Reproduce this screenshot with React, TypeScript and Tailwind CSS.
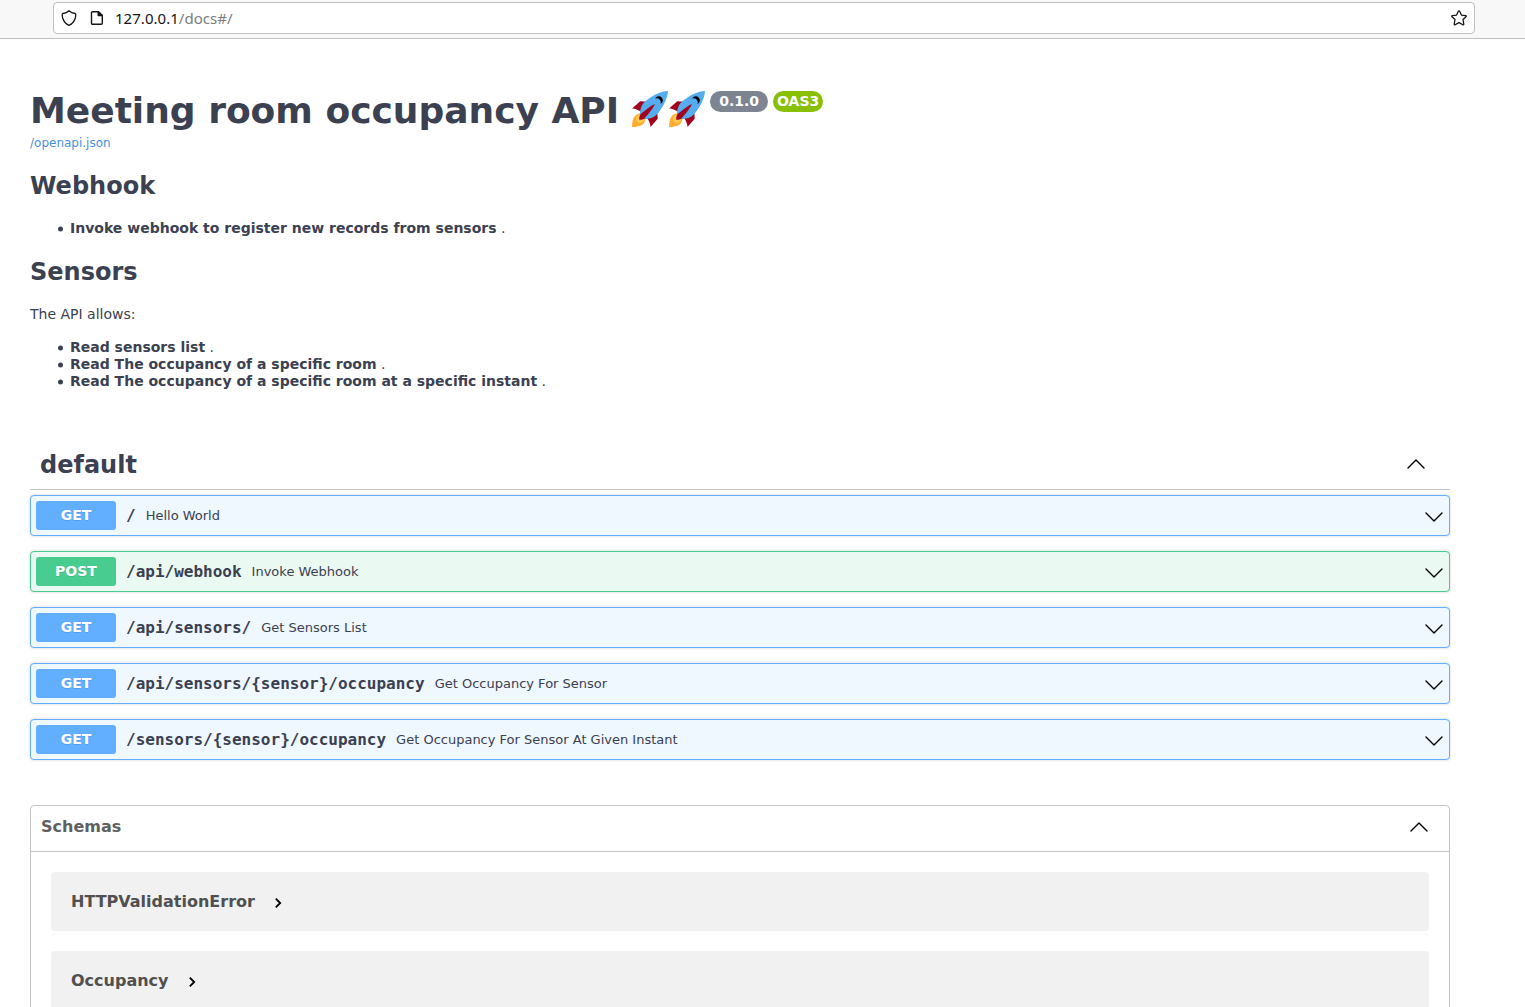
import React from "react";

const operations = [
  { method: "GET", path: "/", summary: "Hello World" },
  { method: "POST", path: "/api/webhook", summary: "Invoke Webhook" },
  { method: "GET", path: "/api/sensors/", summary: "Get Sensors List" },
  { method: "GET", path: "/api/sensors/{sensor}/occupancy", summary: "Get Occupancy For Sensor" },
  { method: "GET", path: "/sensors/{sensor}/occupancy", summary: "Get Occupancy For Sensor At Given Instant" },
];

const schemas = ["HTTPValidationError", "Occupancy"];

function Rocket() {
  return (
    <svg viewBox="0 0 36 36" className="h-[37px] w-[37px] shrink-0" aria-hidden="true">
      <path fill="#A0041E" d="M1 17l8-7 16 1 1 16-7 8s.001-5.999-6-12-12-6-12-6z" />
      <path fill="#FFAC33" d="M.973 35s-.036-7.979 2.985-11S15 21.187 15 21.187 14.999 29 11.999 32c-3 3-11.026 3-11.026 3z" />
      <circle fill="#FFCC4D" cx="8.999" cy="27" r="4" />
      <path fill="#55ACEE" d="M35.999 0s-10 0-22 10c-6 5-6 14-4 16s11 2 16-4c10-12 10-22 10-22z" />
      <path d="M26.999 5c-1.623 0-3.013.971-3.641 2.36.502-.227 1.055-.36 1.641-.36 2.209 0 4 1.791 4 4 0 .586-.133 1.139-.359 1.64 1.389-.627 2.359-2.017 2.359-3.64 0-2.209-1.791-4-4-4z" />
      <path fill="#A0041E" d="M8 28s0-4 1-5 13.001-10.999 14-10-9.001 13-10.001 14S8 28 8 28z" />
    </svg>
  );
}

function Chevron({ up = false }: { up?: boolean }) {
  return (
    <svg viewBox="0 0 18 10" className="h-[10px] w-[18px] shrink-0" fill="none" stroke="#000" strokeWidth="1.4" strokeLinecap="round" strokeLinejoin="round">
      <path d={up ? "M1 8.9 9 1.1l8 7.8" : "M1 1.1 9 8.9 17 1.1"} />
    </svg>
  );
}

function BrowserBar() {
  return (
    <div className="h-[39px] border-b border-[#bfbfc1] bg-[#f8f8f8] pl-[53px] pt-0.5">
      <div className="flex h-8 w-[1422px] items-center rounded-[4px] border border-[#bfbfc1] bg-white pl-[7px] pr-[7px]">
        <svg viewBox="0 0 16 16" className="h-4 w-4" fill="none" stroke="#15141a" strokeWidth="1.3" strokeLinejoin="round">
          <path d="M8 .8C9.8 2.5 11.8 3.2 14.1 3.5 15.1 3.7 14.8 6 14.3 8 13.3 11.5 11 14 8 15.3 5 14 2.7 11.5 1.7 8 1.2 6 .9 3.7 1.9 3.5 4.2 3.2 6.2 2.5 8 .8z" />
        </svg>
        <svg viewBox="0 0 16 16" className="ml-3 h-4 w-4" fill="none" stroke="#15141a" strokeWidth="1.4" strokeLinejoin="round">
          <path d="M3.5 1.7H9.5L13.3 5.5V13.3a1 1 0 0 1-1 1H3.5a1 1 0 0 1-1-1V2.7a1 1 0 0 1 1-1z" />
          <path d="M9.2 1.7V5.6H13.3z" fill="#15141a" />
        </svg>
        <div className="mb-px ml-[10px] font-['Noto_Sans',sans-serif] text-[15px] leading-5 tracking-[0.03px] text-[#7c7c7e]">
          <span className="text-[#15141a]">127.0.0.1</span>/docs#/
        </div>
        <svg viewBox="0 0 16 16" className="ml-auto h-4 w-4" fill="none" stroke="#15141a" strokeWidth="1.3" strokeLinejoin="round">
          <path d="M8 .8Q8.5.8 8.7 1.3L10.4 5.1 14.6 5.6Q15.7 5.9 15 6.7L12 9.5 12.8 14.1Q12.8 15.2 11.9 14.8L8 12.6 4.1 14.8Q3.2 15.2 3.2 14.1L4 9.5 1 6.7Q.3 5.9 1.4 5.6L5.6 5.1 7.3 1.3Q7.5.8 8 .8z" />
        </svg>
      </div>
    </div>
  );
}

function Bullet({ children }: { children: React.ReactNode }) {
  return (
    <li className="flex items-center">
      <svg viewBox="0 0 5 5" className="ml-[28px] mr-[7px] h-[5px] w-[5px] overflow-visible" fill="#3b4151">
        <circle cx="2.5" cy="3" r="2.5" />
      </svg>
      <span>
        <strong className="font-bold">{children}</strong> .
      </span>
    </li>
  );
}

function Operation({ method, path, summary }: { method: string; path: string; summary: string }) {
  const post = method === "POST";
  return (
    <div
      className={
        "flex h-[41px] items-center rounded-[4px] border pl-[5px] pr-[6px] shadow-[0_0_3px_rgba(0,0,0,0.19)] " +
        (post ? "border-[#49cc90] bg-[#ebf9f3]" : "border-[#61affe] bg-[#eff7ff]")
      }
    >
      <span
        className={
          "h-[29px] w-20 rounded-[3px] text-center text-[14px] font-bold leading-[28px] text-white [text-shadow:0_1px_0_rgba(0,0,0,0.1)] " +
          (post ? "bg-[#49cc90]" : "bg-[#61affe]")
        }
      >
        {method}
      </span>
      <span className="ml-[10px] font-['DejaVu_Sans_Mono',monospace] text-[16px] font-bold leading-5">{path}</span>
      <span className="ml-[10px] text-[13px] leading-5">{summary}</span>
      <span className="ml-auto mt-[2px] flex">
        <Chevron />
      </span>
    </div>
  );
}

export default function App() {
  return (
    <div className="h-[1007px] overflow-hidden bg-white font-['DejaVu_Sans',sans-serif] text-[#3b4151]">
      <BrowserBar />
      <main className="ml-[30px] w-[1420px] pt-[51px]">
        <div className="flex h-[42px] items-start">
          <h1 className="whitespace-nowrap text-[36px] font-bold leading-[42px]">Meeting room occupancy API</h1>
          <div className="ml-3 mt-px flex">
            <Rocket />
            <Rocket />
          </div>
          <span className="ml-[5px] mt-px h-[21px] w-[58px] rounded-full bg-[#7d8492] text-center text-[14px] font-bold leading-5 text-white">0.1.0</span>
          <span className="ml-[5px] mt-px h-[21px] w-[50px] rounded-full bg-[#89bf04] text-center text-[14px] font-bold leading-5 text-white">OAS3</span>
        </div>
        <a className="mt-1 block text-[12px] leading-[14px] text-[#4990e2]">/openapi.json</a>
        <h2 className="mt-[22px] text-[24px] font-bold leading-7">Webhook</h2>
        <ul className="mt-5 text-[14px] leading-[17px]">
          <Bullet>Invoke webhook to register new records from sensors</Bullet>
        </ul>
        <h2 className="mt-[21px] text-[24px] font-bold leading-7">Sensors</h2>
        <p className="mt-5 text-[14px] leading-[17px]">The API allows:</p>
        <ul className="mt-4 text-[14px] leading-[17px]">
          <Bullet>Read sensors list</Bullet>
          <Bullet>Read The occupancy of a specific room</Bullet>
          <Bullet>Read The occupancy of a specific room at a specific instant</Bullet>
        </ul>

        <section className="mt-[50px]">
          <div className="flex h-[50px] items-center justify-between border-b border-[#c4c6cb] pl-[10px] pr-[25px]">
            <h3 className="text-[24px] font-bold leading-7">default</h3>
            <span className="mb-[2px] flex">
              <Chevron up />
            </span>
          </div>
          <div className="mt-[5px] flex flex-col gap-[15px]">
            {operations.map((op) => (
              <Operation key={op.path} {...op} />
            ))}
          </div>
        </section>

        <section className="mt-[45px] rounded-[4px] border border-[#c4c4c6] pb-5">
          <div className="flex h-[46px] items-center justify-between border-b border-[#c4c4c6] pb-[3px] pl-[10px] pr-[21px]">
            <h4 className="text-[16px] font-bold leading-5 text-[#606060]">Schemas</h4>
            <Chevron up />
          </div>
          <div className="mx-5 mt-5 flex flex-col gap-5">
            {schemas.map((name) => (
              <div key={name} className="flex h-[59px] items-center rounded-[4px] bg-[#f1f1f1] px-5">
                <span className="text-[16px] font-bold leading-5 text-[#505050]">{name}</span>
                <svg viewBox="0 0 8 12" className="ml-[19px] mt-[3px] h-3 w-2" fill="none" stroke="#000" strokeWidth="1.8">
                  <path d="M1.8 1.6 6.2 6 1.8 10.4" />
                </svg>
              </div>
            ))}
          </div>
        </section>
      </main>
    </div>
  );
}
